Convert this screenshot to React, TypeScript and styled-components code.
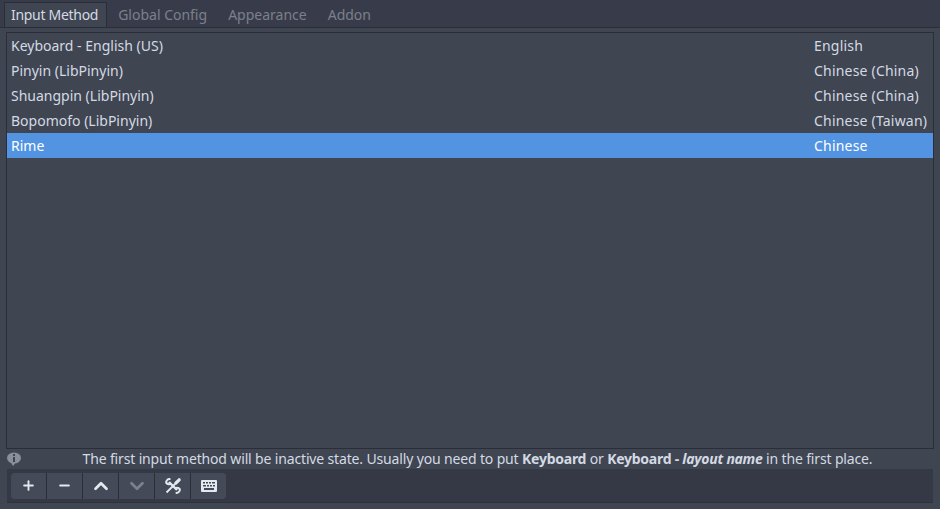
import React from "react";
import styled, { createGlobalStyle } from "styled-components";
import { Plus, Minus, ChevronUp, ChevronDown } from "lucide-react";

const GlobalStyle = createGlobalStyle`
  html, body {
    margin: 0;
    padding: 0;
    background: #383c4a;
    overflow: hidden;
  }
`;

const Window = styled.div`
  width: 940px;
  height: 509px;
  display: flex;
  flex-direction: column;
  background: #383c4a;
  color: #d3dae3;
  font-family: "Noto Sans", sans-serif;
  font-size: 14px;
`;

const TabBar = styled.div`
  height: 27px;
  display: flex;
  padding: 2px 0 0 4px;
  box-sizing: border-box;
`;

const Tab = styled.div<{ $active?: boolean }>`
  height: 25px;
  box-sizing: border-box;
  padding: 0 ${(p) => (p.$active ? "8px" : "9px")} 2px ${(p) => (p.$active ? "6px" : "10px")};
  display: flex;
  align-items: center;
  letter-spacing: ${(p) => (p.$active ? "-0.3px" : "0")};
  color: ${(p) => (p.$active ? "#d3dae3" : "#7b808c")};
  background: ${(p) => (p.$active ? "#404552" : "transparent")};
  border: 1px solid ${(p) => (p.$active ? "#2b2e39" : "transparent")};
  border-bottom: none;
`;

const Panel = styled.div`
  flex: 1;
  display: flex;
  flex-direction: column;
  background: #404552;
  border-top: 1px solid #2b2e39;
  padding: 4px 6px 6px;
`;

const List = styled.div`
  flex: 1;
  background: #404552;
  border: 1px solid #2b2e39;
`;

const Row = styled.div<{ $selected?: boolean }>`
  height: 25px;
  display: grid;
  grid-template-columns: 803px 1fr;
  align-items: center;
  padding-left: 4px;
  background: ${(p) => (p.$selected ? "#5294e2" : "transparent")};
  color: ${(p) => (p.$selected ? "#ffffff" : "#d3dae3")};
  white-space: nowrap;
`;

const Language = styled.span`
  letter-spacing: 0.2px;
`;

const Hint = styled.div`
  height: 20px;
  position: relative;
  display: flex;
  align-items: center;
  justify-content: center;
  padding: 0 0 2px 15px;
  box-sizing: border-box;
  letter-spacing: -0.15px;
  white-space: nowrap;
`;

const Strong = styled.b`
  letter-spacing: -0.25px;
`;

const HintIcon = styled.svg`
  position: absolute;
  left: 1px;
  top: 3px;
`;

const Toolbar = styled.div`
  height: 34px;
  box-sizing: border-box;
  margin: 0 1px;
  display: flex;
  align-items: center;
  padding-left: 4px;
  background: #353945;
  border-bottom: 1px solid #2f323d;
`;

const ButtonGroup = styled.div`
  display: flex;
  height: 26px;
  border-radius: 3px;
  overflow: hidden;
  background: #2b2e39;
  gap: 1px;
`;

const ToolButton = styled.div<{ $disabled?: boolean }>`
  width: 35px;
  display: flex;
  align-items: center;
  justify-content: center;
  background: #444a58;
  color: ${(p) => (p.$disabled ? "#7b808c" : "#e4e8ef")};
`;

const rows = [
  ["Keyboard - English (US)", "English"],
  ["Pinyin (LibPinyin)", "Chinese (China)"],
  ["Shuangpin (LibPinyin)", "Chinese (China)"],
  ["Bopomofo (LibPinyin)", "Chinese (Taiwan)"],
  ["Rime", "Chinese"],
];

const ToolsIcon = () => (
  <svg width="18" height="18" viewBox="0 0 18 18" fill="none" stroke="currentColor">
    {/* double ended wrench */}
    <path strokeWidth="2.4" d="M5 5l8 8" />
    <path strokeWidth="2" strokeLinecap="round" d="M5.6 2.1A3.4 3.4 0 0 0 2.1 5.6 3.4 3.4 0 0 0 6 7" />
    <path strokeWidth="2" strokeLinecap="round" d="M12.4 15.9a3.4 3.4 0 0 0 3.5-3.5A3.4 3.4 0 0 0 12 11" />
    {/* screwdriver */}
    <path strokeWidth="3.2" strokeLinecap="round" d="M15.2 2.8l-3.4 3.4" />
    <path strokeWidth="1.8" d="M11 7l-8.5 8.5" />
  </svg>
);

const KeyboardIcon = () => (
  <svg width="16" height="12" viewBox="0 0 16 12">
    <path
      fill="currentColor"
      fillRule="evenodd"
      d="M1 0h14a1 1 0 0 1 1 1v10a1 1 0 0 1-1 1H1a1 1 0 0 1-1-1V1a1 1 0 0 1 1-1zM2 2v1.5h2V2zm3 0v1.5h2V2zm3 0v1.5h2V2zm3 0v1.5h3V2zM2 5v1.5h3V5zm4 0v1.5h2V5zm3 0v1.5h2V5zm3 0v1.5h2V5zM3 8v2h10V8z"
    />
  </svg>
);

const App: React.FC = () => {
  return (
    <Window>
      <GlobalStyle />
      <TabBar>
        <Tab $active>Input Method</Tab>
        <Tab>Global Config</Tab>
        <Tab>Appearance</Tab>
        <Tab>Addon</Tab>
      </TabBar>
      <Panel>
        <List>
          {rows.map(([name, lang], index) => (
            <Row key={index} $selected={index === 4}>
              <span>{name}</span>
              <Language>{lang}</Language>
            </Row>
          ))}
        </List>
        <Hint>
          <HintIcon width="14" height="14" viewBox="0 0 14 14">
            <ellipse cx="7" cy="6" rx="7" ry="5.6" fill="#8a8f9b" />
            <path fill="#8a8f9b" d="M3.5 10l2.5 4 2.5-3z" />
            <rect x="6" y="2" width="2" height="2" fill="#404552" />
            <rect x="6" y="5" width="2" height="5" fill="#404552" />
          </HintIcon>
          <span>
            The first input method will be inactive state. Usually you need to put{" "}
            <Strong>Keyboard</Strong> or <Strong>Keyboard - <i>layout name</i></Strong> in the first place.
          </span>
        </Hint>
        <Toolbar>
          <ButtonGroup>
            <ToolButton>
              <Plus size={15} strokeWidth={3} />
            </ToolButton>
            <ToolButton>
              <Minus size={15} strokeWidth={3} />
            </ToolButton>
            <ToolButton>
              <ChevronUp size={22} strokeWidth={3} />
            </ToolButton>
            <ToolButton $disabled>
              <ChevronDown size={22} strokeWidth={3} />
            </ToolButton>
            <ToolButton>
              <ToolsIcon />
            </ToolButton>
            <ToolButton>
              <KeyboardIcon />
            </ToolButton>
          </ButtonGroup>
        </Toolbar>
      </Panel>
    </Window>
  );
};

export default App;
